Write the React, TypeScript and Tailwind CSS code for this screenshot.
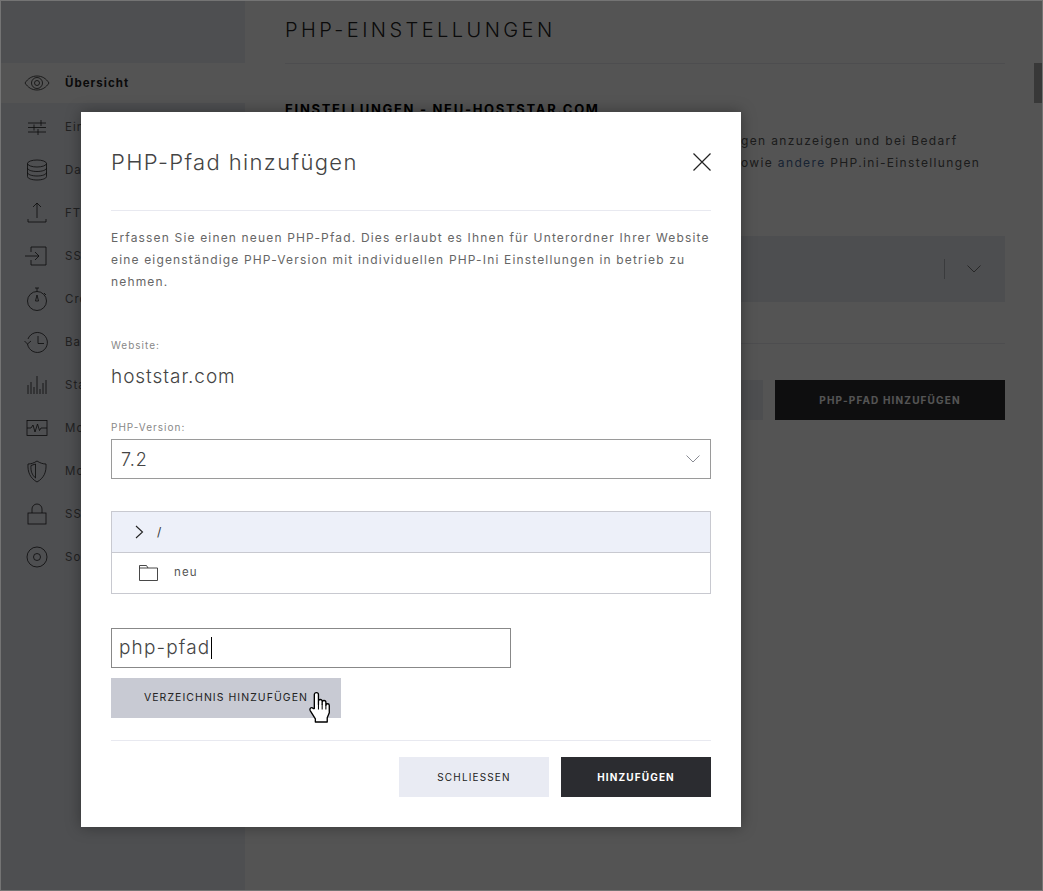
import type { ReactNode } from "react";

const font = { fontFamily: '"Inter", "Liberation Sans", sans-serif' };

function Icon({ children }: { children: ReactNode }) {
  return (
    <svg width="28" height="28" viewBox="0 0 28 28" fill="none" stroke="currentColor" strokeWidth="0.800">
      {children}
    </svg>
  );
}

function Chevron({ className }: { className: string }) {
  return (
    <svg width="14" height="8" viewBox="0 0 14 8" fill="none" stroke="currentColor" strokeWidth="1" className={className}>
      <path d="M.500 .500 7 7l6.500-6.500" />
    </svg>
  );
}

const navItems: { label: string; icon: ReactNode }[] = [
  {
    label: "Übersicht",
    icon: (
      <>
        <path d="M2 14c3-4.600 7-7 12-7s9 2.400 12 7c-3 4.600-7 7-12 7s-9-2.400-12-7z" />
        <circle cx="14" cy="14" r="5.500" />
        <circle cx="14" cy="14" r="2.500" />
      </>
    ),
  },
  {
    label: "Einstellungen",
    icon: <path d="M5 10h18M5 14.500h18M5 19h18M18 7v6M11 11.500v6M15 16v6" />,
  },
  {
    label: "Datenbanken",
    icon: (
      <>
        <ellipse cx="14" cy="7.500" rx="9.500" ry="3.500" />
        <path d="M4.500 7.500v13c0 2 4.300 3.500 9.500 3.500s9.500-1.500 9.500-3.500v-13M4.500 12c0 2 4.300 3.500 9.500 3.500s9.500-1.500 9.500-3.500M4.500 16.500c0 2 4.300 3.500 9.500 3.500s9.500-1.500 9.500-3.500" />
      </>
    ),
  },
  {
    label: "FTP",
    icon: <path d="M14 19V4M10 8l4-4 4 4M5 20v3h18v-3" />,
  },
  {
    label: "SSH",
    icon: <path d="M8 10V5h15v18H8v-5M2 14h14M12 10l4 4-4 4" />,
  },
  {
    label: "Cronjobs",
    icon: (
      <>
        <circle cx="14" cy="16" r="9.500" />
        <path d="M12 3h4M14 3v3.500M14 10l-1.500 6h3zM21 8l2 2" />
      </>
    ),
  },
  {
    label: "Backups",
    icon: (
      <>
        <path d="M5 11a10 10 0 1 1-.500 5M1.500 13l3 3 3.500-3" />
        <path d="M15 8v7.500h6" />
      </>
    ),
  },
  {
    label: "Statistiken",
    icon: <path d="M5 23v-9M8 23V11M11 23v-7M14 23V5M17 23v-5M20 23V12M23 23V9" />,
  },
  {
    label: "Monitoring",
    icon: (
      <>
        <rect x="4" y="6.500" width="20" height="15" />
        <path d="M4 14h4l2-3 2 7 2.500-8 2 6.500 1.500-2.500h6" />
      </>
    ),
  },
  {
    label: "Modsecurity",
    icon: <path d="M14 4c3 2 6 3 9 3 .500 8-2 14-9 18-7-4-9.500-10-9-18 3 0 6-1 9-3zM8 8.500l4.500-1.500v14C9 18 7.500 14 8 8.500z" />,
  },
  {
    label: "SSL",
    icon: (
      <>
        <rect x="5" y="13" width="18" height="11" />
        <path d="M9 13V9a5 5 0 0 1 10 0v4" />
      </>
    ),
  },
  {
    label: "Software",
    icon: (
      <>
        <circle cx="14" cy="14" r="10" />
        <circle cx="14" cy="14" r="3.500" />
      </>
    ),
  },
];

function Sidebar() {
  return (
    <aside className="flex w-[245px] shrink-0 flex-col bg-[#eceef6]">
      <div className="h-[63px]" />
      {navItems.map((item, i) => (
        <div
          key={item.label}
          className={`flex items-center gap-[14px] pl-[23px] text-[11.500px] tracking-[0.09em] ${
            i === 0 ? "mb-[2px] h-[40px] bg-white font-bold text-[#222]" : "h-[43px] text-[#666]"
          }`}
        >
          <span className="text-[#222]">
            <Icon>{item.icon}</Icon>
          </span>
          <span className="pt-[2px]">{item.label}</span>
        </div>
      ))}
    </aside>
  );
}

function Main() {
  return (
    <main className="flex-1 pl-10 pr-[38px]">
      <h1 className="flex h-[64px] items-center border-b border-[#e8e9ef] pb-[4px] text-[20px] font-light tracking-[0.172em] text-[#222]">
        PHP-EINSTELLUNGEN
      </h1>
      <h2 className="mt-[37px] text-[13px] leading-4 font-bold tracking-[0.13em] whitespace-nowrap text-black">
        EINSTELLUNGEN - NEU-HOSTSTAR.COM
      </h2>
      <div className="mt-[13px] text-[12px] leading-[22px] tracking-[0.113em] whitespace-nowrap text-[#555]">
        <p className="pl-[456px]">gen anzuzeigen und bei Bedarf</p>
        <p className="pl-[456px]">
          owie <span className="text-[#4a6a9a]">andere</span> PHP.ini-Einstellungen
        </p>
      </div>
      <div className="mt-[62px] flex h-[66px] items-center justify-end bg-[#e9ebf3] pr-[24px]">
        <span className="mr-[22px] h-[20px] w-px bg-[#b0b2ba]" />
        <Chevron className="text-[#777]" />
      </div>
      <div className="mt-[41px] border-t border-[#e8e9ef] pt-[36px]">
        <div className="flex justify-end gap-3">
          <div className="h-10 w-[230px] bg-[#e9ebf3]" />
          <button className="h-10 w-[230px] bg-[#2b2c30] text-[10px] font-bold tracking-[0.115em] text-white">
            PHP-PFAD HINZUFÜGEN
          </button>
        </div>
      </div>
    </main>
  );
}

function HandCursor() {
  return (
    <svg
      width="26"
      height="32"
      viewBox="1 0 21 31"
      className="absolute top-[13px] left-[196px]"
      fill="#fff"
      stroke="#000"
      strokeWidth="1.300"
      strokeLinejoin="round"
    >
      <path d="M6 17V3.500a2 2 0 0 1 4 0V13l0-3a1.800 1.800 0 0 1 3.600 0v3l0-2a1.800 1.800 0 0 1 3.600 0v3a1.600 1.600 0 0 1 3.300 0v7l-2 5v4H7v-3l-5-8c-1-2 1-4 3-2z" />
      <path d="M10 13v5M13.600 13v5M17.200 14v4" fill="none" strokeWidth="1" />
    </svg>
  );
}

function Modal() {
  return (
    <div className="absolute top-[112px] left-[81px] flex h-[715px] w-[660px] flex-col bg-white px-[30px] shadow-[0_0_14px_rgba(0,0,0,0.35)]">
      <div className="flex h-[99px] items-center justify-between border-b border-[#e8e9f0] pt-[2px]">
        <h2 className="text-[22px] font-light tracking-[0.062em] text-[#444]">PHP-Pfad hinzufügen</h2>
        <svg width="18" height="18" viewBox="0 0 18 18" fill="none" stroke="#222" strokeWidth="1.200">
          <path d="M.500 .500l17 17M17.500 .500l-17 17" />
        </svg>
      </div>
      <p className="mt-[16px] text-[12px] leading-[22px] tracking-[0.097em] text-[#666]">
        Erfassen Sie einen neuen PHP-Pfad. Dies erlaubt es Ihnen für Unterordner Ihrer Website eine eigenständige PHP-Version mit individuellen PHP-Ini Einstellungen in betrieb zu nehmen.
      </p>
      <div className="mt-[44px] text-[10px] leading-4 tracking-[0.1em] text-[#888]">Website:</div>
      <div className="mt-[10px] text-[19px] leading-7 font-light tracking-[0.05em] text-[#444]">hoststar.com</div>
      <label className="mt-[28px] text-[10px] leading-4 tracking-[0.1em] text-[#888]">PHP-Version:</label>
      <div className="mt-[4px] flex h-10 items-center justify-between border border-[#9a9a9a] pr-[10px] pl-[9px]">
        <span className="text-[18px] font-light tracking-[0.05em] text-[#444]">7.2</span>
        <Chevron className="text-[#8a8c94]" />
      </div>
      <div className="mt-[32px] border border-[#c8c9d0]">
        <div className="flex h-[41px] items-center gap-[13px] border-b border-[#c8c9d0] bg-[#edf0f9] pl-[23px] text-[12px] text-[#333]">
          <svg width="9" height="14" viewBox="0 0 9 14" fill="none" stroke="#222" strokeWidth="1.100">
            <path d="M1 1l6.500 6L1 13" />
          </svg>
          <span>/</span>
        </div>
        <div className="flex h-[40px] items-center gap-[16px] pl-[27px] text-[11.500px] tracking-[0.1em] text-[#555]">
          <svg width="19" height="16" viewBox="0 0 19 16" fill="none" stroke="#333" strokeWidth="0.900">
            <path d="M.500 15.500V.500h7l1.500 2.500h9.500v12.500zM.500 3H9" />
          </svg>
          neu
        </div>
      </div>
      <div className="mt-[34px] flex h-10 w-[400px] items-center border border-[#888] pl-[7px] text-[19px] font-light tracking-[0.06em] text-[#444]">
        php-pfad<span className="ml-px h-[22px] w-px bg-black" />
      </div>
      <div className="relative mt-[10px] flex h-10 w-[230px] items-center justify-center bg-[#c8cad3] text-[10.500px] tracking-[0.1em] text-[#222]">
        VERZEICHNIS HINZUFÜGEN
        <HandCursor />
      </div>
      <div className="mt-[22px] flex justify-end gap-3 border-t border-[#e8e9f0] pt-[16px]">
        <button className="h-10 w-[150px] bg-[#e9ebf3] text-[10px] tracking-[0.115em] text-[#222]">SCHLIESSEN</button>
        <button className="h-10 w-[150px] bg-[#2b2c30] text-[10px] font-bold tracking-[0.115em] text-white">HINZUFÜGEN</button>
      </div>
    </div>
  );
}

export default function App() {
  return (
    <div style={font} className="relative flex h-[891px] w-[1043px] overflow-hidden bg-white">
      <Sidebar />
      <Main />
      <div className="absolute top-[63px] right-0 h-10 w-[9px] bg-[#aaa]" />
      <div className="absolute inset-0 border border-[#747474] bg-[rgba(0,0,0,0.67)]" />
      <Modal />
    </div>
  );
}
